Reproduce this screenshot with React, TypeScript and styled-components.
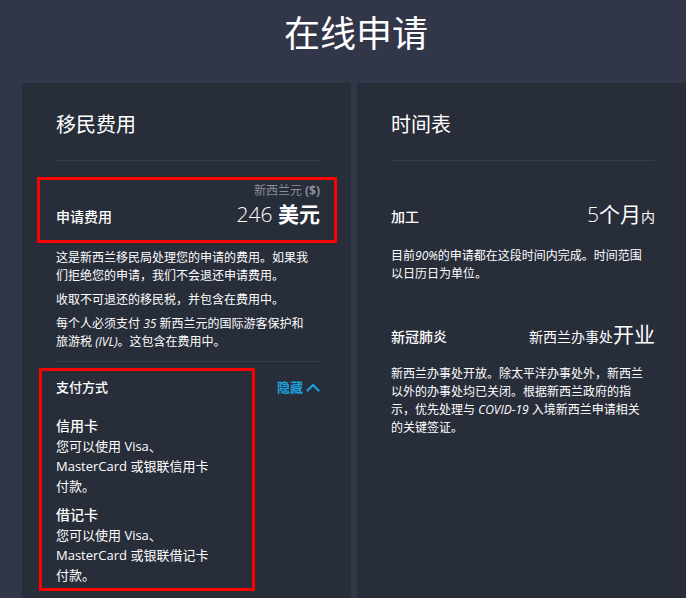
import styled, { createGlobalStyle } from 'styled-components';

const GlobalStyle = createGlobalStyle`
  html, body {
    margin: 0;
    padding: 0;
    background-color: #323649;
  }
  body {
    font-family: 'Open Sans', 'Noto Sans CJK SC', sans-serif;
    color: #fff;
  }
  * {
    box-sizing: border-box;
  }
`;

const ChevronUp = () => (
  <svg width="14" height="10" viewBox="0 0 14 10" fill="none">
    <polyline points="1.5,8.5 7,3 12.5,8.5" stroke="currentColor" strokeWidth="2.3" strokeLinecap="round" strokeLinejoin="round" />
  </svg>
);

const App = () => {
  return (
    <>
      <GlobalStyle />
      <Page>
        <Header>在线申请</Header>
        <Panels>
          <Panel>
            <PanelTitle>移民费用</PanelTitle>
            <FeeSection>
              <FeeBox>
                <Currency>
                  新西兰元 <b>($)</b>
                </Currency>
                <StatRow>
                  <StatLabel>申请费用</StatLabel>
                  <StatValue>
                    <Light>246</Light> <Strong>美元</Strong>
                  </StatValue>
                </StatRow>
              </FeeBox>
              <Desc>这是新西兰移民局处理您的申请的费用。如果我们拒绝您的申请，我们不会退还申请费用。</Desc>
              <Desc>收取不可退还的移民税，并包含在费用中。</Desc>
              <Desc>
                每个人必须支付 <Em>35</Em> 新西兰元的国际游客保护和旅游税 <Em>(IVL)</Em>。这包含在费用中。
              </Desc>
            </FeeSection>
            <PaymentRow>
              <PaymentBox>
                <PaymentTitle>支付方式</PaymentTitle>
                <Card>
                  <CardTitle>信用卡</CardTitle>
                  <CardText>您可以使用 Visa、MasterCard 或银联信用卡付款。</CardText>
                </Card>
                <Card>
                  <CardTitle>借记卡</CardTitle>
                  <CardText>您可以使用 Visa、MasterCard 或银联借记卡付款。</CardText>
                </Card>
              </PaymentBox>
              <Toggle>
                隐藏
                <ChevronUp />
              </Toggle>
            </PaymentRow>
          </Panel>
          <Panel>
            <PanelTitle>时间表</PanelTitle>
            <StatRow $top={38}>
              <StatLabel>加工</StatLabel>
              <StatValue>
                <Light>5</Light>个月<Unit>内</Unit>
              </StatValue>
            </StatRow>
            <Desc $top={15}>
              目前<Em>90%</Em>的申请都在这段时间内完成。时间范围以日历日为单位。
            </Desc>
            <StatRow $top={36}>
              <StatLabel>新冠肺炎</StatLabel>
              <StatValue>
                <Unit>新西兰办事处</Unit>开业
              </StatValue>
            </StatRow>
            <Desc $top={13}>
              新西兰办事处开放。除太平洋办事处外，新西兰以外的办事处均已关闭。根据新西兰政府的指示，优先处理与{' '}
              <Em>COVID-19</Em> 入境新西兰申请相关的关键签证。
            </Desc>
          </Panel>
        </Panels>
      </Page>
    </>
  );
};

export default App;

const Page = styled.main`
  height: 100vh;
  display: flex;
  flex-direction: column;
  background-color: #323649;
  overflow: hidden;
`;

const Header = styled.h1`
  margin: 0;
  padding: 6px 0 27px 26px;
  text-align: center;
  font-size: 36px;
  line-height: 50px;
  font-weight: 400;
  color: #fff;
  font-family: 'Noto Sans CJK SC', sans-serif;
`;

const Panels = styled.div`
  flex: 1;
  display: flex;
  gap: 6px;
  padding-left: 22px;
`;

const Panel = styled.section`
  width: 329px;
  flex-shrink: 0;
  padding: 28px 31px 0 34px;
  background-color: #282d3a;
`;

const PanelTitle = styled.h2`
  margin: 0;
  padding-bottom: 21px;
  border-bottom: 1px solid #383d4b;
  font-size: 20px;
  line-height: 28px;
  font-weight: 400;
`;

const FeeSection = styled.div`
  padding-bottom: 10px;
  border-bottom: 1px solid #383d4b;
`;

const FeeBox = styled.div`
  margin: 16px -17px 0 -19px;
  padding: 3px 14px 8px 16px;
  border: 3px solid #ff0000;
`;

const Currency = styled.div`
  text-align: right;
  font-size: 12px;
  line-height: 16px;
  color: #8b8f9a;

  b {
    font-weight: 700;
  }
`;

const StatRow = styled.div<{ $top?: number }>`
  display: flex;
  justify-content: space-between;
  align-items: baseline;
  margin-top: ${({ $top }) => $top ?? 0}px;
  line-height: 30px;
`;

const StatLabel = styled.span`
  font-size: 14px;
  font-weight: 500;
`;

const StatValue = styled.span`
  font-size: 21px;
  font-weight: 400;
`;

const Light = styled.span`
  font-weight: 300;
`;

const Strong = styled.span`
  font-weight: 700;
`;

const Unit = styled.span`
  font-size: 14px;
`;

const Desc = styled.p<{ $top?: number }>`
  margin: ${({ $top }) => $top ?? 6}px 0 0;
  max-width: 258px;
  font-size: 12px;
  line-height: 18px;
  font-weight: 400;
  color: #fff;
`;

const Em = styled.i`
  font-style: italic;
`;

const PaymentRow = styled.div`
  display: flex;
  justify-content: space-between;
  align-items: flex-start;
`;

const PaymentBox = styled.div`
  width: 216px;
  margin: 6px 0 0 -17px;
  padding: 6px 14px 3px 14px;
  border: 3px solid #ff0000;
`;

const PaymentTitle = styled.div`
  padding-bottom: 10px;
  font-size: 13px;
  line-height: 20px;
  font-weight: 500;
`;

const Card = styled.div`
  margin-top: 9px;
`;

const CardTitle = styled.div`
  font-size: 14px;
  line-height: 20px;
  font-weight: 500;
`;

const CardText = styled.div`
  max-width: 158px;
  font-size: 13px;
  line-height: 20px;
`;

const Toggle = styled.button`
  display: flex;
  align-items: center;
  gap: 3px;
  margin-top: 15px;
  padding: 0;
  border: none;
  background: none;
  color: #1ca0da;
  font-family: inherit;
  font-size: 13px;
  line-height: 20px;
  font-weight: 600;
  cursor: pointer;
`;
